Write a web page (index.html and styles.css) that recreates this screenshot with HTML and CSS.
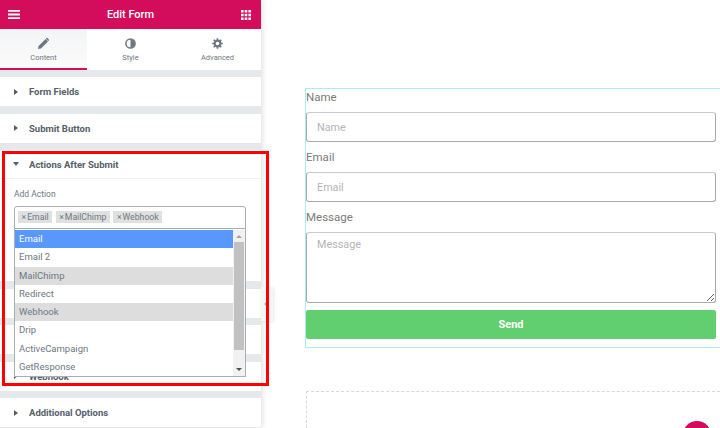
FILE: index.html
```html
<!DOCTYPE html>
<html lang="en">
<head>
    <meta charset="UTF-8">
    <meta name="viewport" content="width=device-width, initial-scale=1.0">
    <title>Edit Form</title>
    <link rel="stylesheet" href="styles.css">
</head>
<body>
    <div class="panel">
        <div class="panel-header">
            <svg class="menu-icon" width="12" height="9" viewBox="0 0 12 9"><path d="M0 0h12v1.8H0zM0 3.6h12v1.8H0zM0 7.2h12V9H0z" fill="#fff"/></svg>
            <span>Edit Form</span>
            <svg class="grid-icon" width="10" height="10" viewBox="0 0 10 10"><path d="M0 0h2.6v2.6H0zM3.7 0h2.6v2.6H3.7zM7.4 0H10v2.6H7.4zM0 3.7h2.6v2.6H0zM3.7 3.7h2.6v2.6H3.7zM7.4 3.7H10v2.6H7.4zM0 7.4h2.6V10H0zM3.7 7.4h2.6V10H3.7zM7.4 7.4H10V10H7.4z" fill="#fff"/></svg>
        </div>

        <div class="tabs">
            <div class="tab active">
                <svg width="11" height="11" viewBox="0 0 11 11"><path d="M0 11l.6-3L7.6 1l2.4 2.4-7 7zM8.3.3a1 1 0 0 1 1.4 0l1 1a1 1 0 0 1 0 1.4l-.4.4L7.9.7z" fill="#6d7882"/></svg>
                <span>Content</span>
            </div>
            <div class="tab">
                <svg width="11" height="11" viewBox="0 0 11 11"><circle cx="5.5" cy="5.5" r="4.6" fill="none" stroke="#6d7882" stroke-width="1.5"/><path d="M5.5 1a4.5 4.5 0 0 1 0 9z" fill="#6d7882"/></svg>
                <span>Style</span>
            </div>
            <div class="tab">
                <svg width="11" height="11" viewBox="0 0 11 11"><circle cx="5.5" cy="5.5" r="2.9" fill="none" stroke="#6d7882" stroke-width="2.2"/><path d="M5.5 5.5V.2M5.5 5.5v5.3M5.5 5.5H.2M5.5 5.5h5.3M5.5 5.5L1.7 1.7M5.5 5.5l3.8 3.8M5.5 5.5L9.3 1.7M5.5 5.5L1.7 9.3" stroke="#6d7882" stroke-width="1.6" stroke-dasharray="5.3 10" stroke-dashoffset="-3.6"/></svg>
                <span>Advanced</span>
            </div>
        </div>

        <div class="section"><i class="caret"></i>Form Fields</div>
        <div class="section"><i class="caret"></i>Submit Button</div>

        <div class="section open"><i class="caret down"></i>Actions After Submit</div>
        <div class="section-body">
            <div class="field-label">Add Action</div>
            <div class="select-box">
                <span class="tag"><b>×</b>Email</span>
                <span class="tag"><b>×</b>MailChimp</span>
                <span class="tag"><b>×</b>Webhook</span>
            </div>
        </div>

        <div class="section"></div>
        <div class="section"></div>
        <div class="section"><i class="caret"></i>Webhook</div>
        <div class="section"><i class="caret"></i>Additional Options</div>

        <div class="dropdown">
            <div class="options">
                <div class="option current">Email</div>
                <div class="option">Email 2</div>
                <div class="option picked">MailChimp</div>
                <div class="option">Redirect</div>
                <div class="option picked">Webhook</div>
                <div class="option">Drip</div>
                <div class="option">ActiveCampaign</div>
                <div class="option">GetResponse</div>
            </div>
            <div class="scrollbar">
                <i class="arrow-up"></i>
                <div class="thumb"></div>
                <i class="arrow-down"></i>
            </div>
        </div>

        <div class="collapse-handle"><i></i></div>
        <div class="highlight"></div>
    </div>

    <div class="preview">
        <div class="form-box">
            <label>Name</label>
            <input type="text" placeholder="Name">
            <label>Email</label>
            <input type="text" placeholder="Email">
            <label>Message</label>
            <textarea placeholder="Message"></textarea>
            <button>Send</button>
        </div>
        <div class="drop-area">
            <div class="add-btn"></div>
        </div>
    </div>
</body>
</html>
```

FILE: styles.css
```css
body {
    margin: 0;
    height: 428px;
    overflow: hidden;
    display: flex;
    background-color: #fff;
    font-family: Roboto, "Liberation Sans", sans-serif;
}
.panel {
    position: relative;
    flex: 0 0 261px;
    height: 428px;
    background-color: #e6e9ec;
    box-shadow: 1px 0 6px rgba(0, 0, 0, 0.14);
}
.panel-header {
    height: 29px;
    display: flex;
    align-items: center;
    justify-content: space-between;
    padding: 0 10px 0 8px;
    background-color: #d30c5c;
    color: #fff;
    font-size: 11px;
    font-weight: 500;
}
.tabs {
    display: flex;
    height: 40.5px;
    background-color: #fff;
}
.tab {
    flex: 1;
    display: flex;
    flex-direction: column;
    align-items: center;
    padding-top: 9px;
    gap: 4px;
    box-sizing: border-box;
    font-size: 7.5px;
    color: #6d7882;
}
.tab.active {
    background-image: linear-gradient(to bottom, #f3f4f5, #fbfbfb);
    border-bottom: 2px solid #d30c5c;
}
.section {
    display: flex;
    align-items: center;
    height: 29px;
    margin-top: 7.5px;
    padding-left: 14px;
    box-sizing: border-box;
    background-color: #fff;
    font-size: 9.5px;
    font-weight: 700;
    color: #556068;
}
.section.open {
    border-bottom: 1px solid #eef0f2;
}
.section-body {
    height: 102px;
    padding: 11px 14px 0;
    box-sizing: border-box;
    background-color: #fff;
}
.caret {
    width: 0;
    height: 0;
    margin-right: 11px;
    border-left: 4px solid #556068;
    border-top: 3px solid transparent;
    border-bottom: 3px solid transparent;
}
.caret.down {
    margin-left: -1px;
    margin-right: 10px;
    border-top: 4px solid #556068;
    border-left: 3.5px solid transparent;
    border-right: 3.5px solid transparent;
    border-bottom: 0;
}
.field-label {
    height: 16px;
    font-size: 8.5px;
    line-height: 9px;
    color: #6d7882;
}
.select-box {
    width: 232px;
    height: 23px;
    display: flex;
    align-items: flex-start;
    gap: 3.5px;
    padding: 4px 3px 0;
    box-sizing: border-box;
    border: 1px solid #a9aeb3;
    border-radius: 3px 3px 0 0;
    background-color: #fff;
}
.tag {
    height: 12px;
    line-height: 12px;
    padding: 0 3.5px;
    background-color: #e0e0e0;
    font-size: 8.7px;
    color: #6d7882;
}
.tag b {
    font-weight: 400;
    margin-right: 1px;
}
.dropdown {
    position: absolute;
    left: 14px;
    top: 229px;
    width: 232px;
    height: 148px;
    display: flex;
    box-sizing: border-box;
    padding-top: 1px;
    border: 1px solid #a9aeb3;
    border-top: 0;
    background-color: #fff;
}
.options {
    flex: 1;
}
.option {
    height: 18.3px;
    line-height: 18px;
    padding-left: 4px;
    font-size: 9.5px;
    color: #6d7882;
}
.option.current {
    background-color: #5897fb;
    color: #fff;
}
.option.picked {
    background-color: #ddd;
}
.scrollbar {
    position: relative;
    flex: 0 0 12px;
    background-color: #f1f1f1;
}
.thumb {
    position: absolute;
    left: 1px;
    right: 1px;
    top: 12px;
    height: 108px;
    background-color: #c1c1c1;
}
.arrow-up, .arrow-down {
    position: absolute;
    left: 3px;
    width: 0;
    height: 0;
    border-left: 3px solid transparent;
    border-right: 3px solid transparent;
}
.arrow-up {
    top: 5px;
    border-bottom: 3px solid #a3a3a3;
}
.arrow-down {
    bottom: 5px;
    border-top: 3px solid #505050;
}
.highlight {
    position: absolute;
    left: 2px;
    top: 150.5px;
    width: 267px;
    height: 235px;
    box-sizing: border-box;
    border: 3px solid #f00;
}
.collapse-handle {
    position: absolute;
    left: 261px;
    top: 287px;
    width: 12px;
    height: 34px;
    background-color: #f5f6f7;
    box-shadow: 1px 1px 3px rgba(0, 0, 0, 0.1);
}
.collapse-handle i {
    position: absolute;
    left: 3px;
    top: 14px;
    width: 0;
    height: 0;
    border-right: 3px solid #a4afb7;
    border-top: 3px solid transparent;
    border-bottom: 3px solid transparent;
}
.preview {
    flex: 1;
    padding: 88px 0 0 44px;
}
.form-box {
    width: 415px;
    height: 260px;
    box-sizing: border-box;
    border: 1px solid #a9ecf5;
    border-right: 0;
    display: flex;
    flex-direction: column;
}
.form-box label {
    height: 23px;
    font-size: 11.5px;
    line-height: 16px;
    color: #7a7a7a;
}
.form-box input, .form-box textarea {
    display: block;
    width: 410px;
    box-sizing: border-box;
    margin-bottom: 7px;
    padding: 0 10px;
    border: 1px solid #a7abb0;
    border-top-color: #c7cbcf;
    border-radius: 3px;
    font-family: inherit;
    font-size: 10.8px;
    color: #7a7a7a;
    outline: none;
}
.form-box input {
    height: 30px;
}
.form-box input::placeholder, .form-box textarea::placeholder {
    color: #b4b4b4;
    opacity: 1;
}
.form-box textarea {
    height: 71px;
    padding-top: 5px;
}
.form-box button {
    width: 410px;
    height: 29px;
    border: none;
    border-radius: 2px;
    background-color: #61ce70;
    color: #fff;
    font-family: inherit;
    font-size: 11px;
    font-weight: 700;
}
.drop-area {
    position: relative;
    width: 414px;
    height: 37px;
    overflow: hidden;
    margin: 43px 0 0 1px;
    box-sizing: border-box;
    border: 1px dashed #d5dadf;
    border-right: 0;
    border-bottom: 0;
}
.add-btn {
    position: absolute;
    right: 9px;
    top: 29px;
    width: 28px;
    height: 28px;
    border-radius: 50%;
    background-color: #d30c5c;
}
```
